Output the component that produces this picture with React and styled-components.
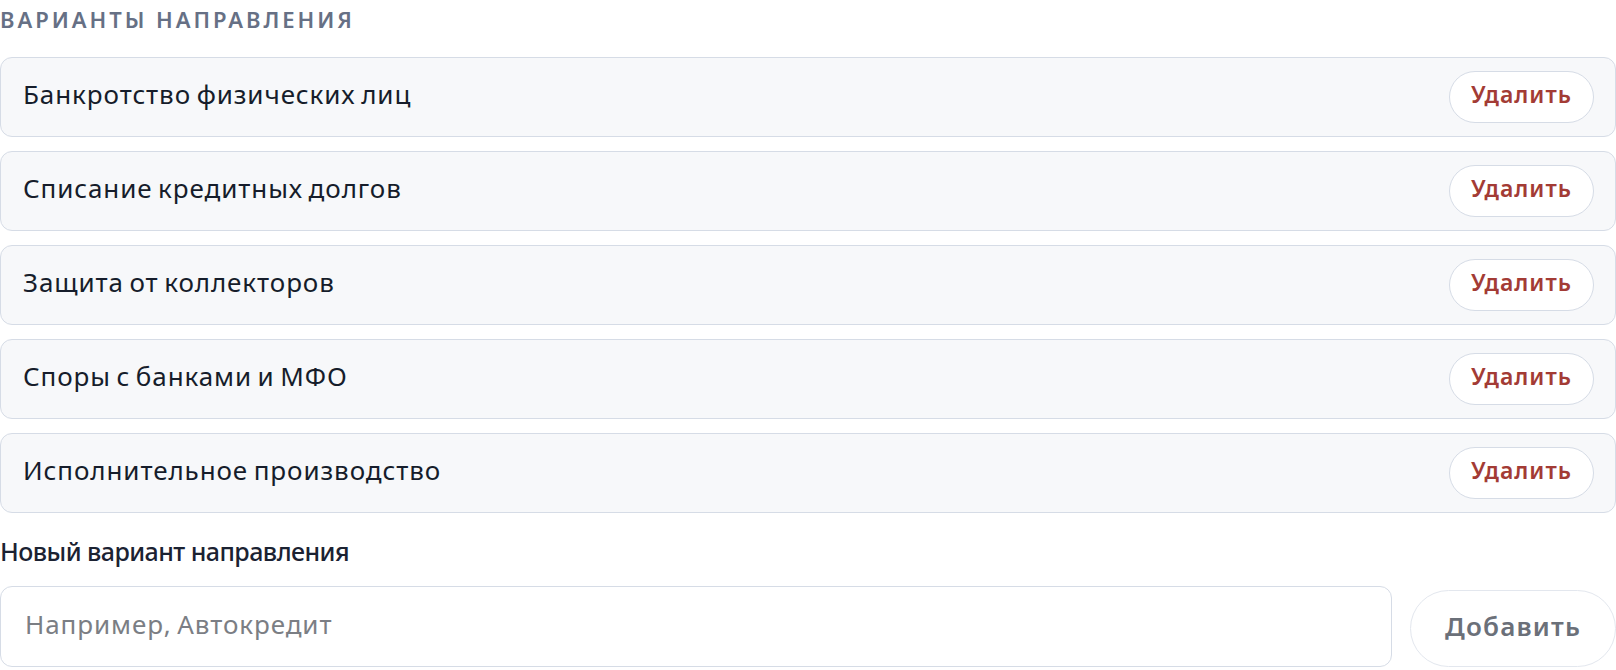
import React, { useState } from 'react'
import styled, { createGlobalStyle } from 'styled-components'

const GlobalStyle = createGlobalStyle`
  html, body {
    margin: 0;
    padding: 0;
    background: #ffffff;
  }
  body {
    font-family: 'Noto Sans', 'Open Sans', sans-serif;
    -webkit-font-smoothing: antialiased;
  }
  * {
    box-sizing: border-box;
  }
`

const Section = styled.section`
  display: flex;
  flex-direction: column;
  width: 100%;
`

const Heading = styled.h2`
  margin: 0 0 19px;
  font-size: 22px;
  line-height: 38px;
  font-weight: 600;
  letter-spacing: 0.135em;
  text-transform: uppercase;
  color: #667085;
`

const List = styled.div`
  display: flex;
  flex-direction: column;
  gap: 14px;
`

const Row = styled.div`
  display: flex;
  align-items: center;
  justify-content: space-between;
  height: 80px;
  padding: 0 21px 0 22px;
  background: #f7f8fa;
  border: 1px solid #d6dce6;
  border-radius: 12px;
`

const RowTitle = styled.span`
  margin-bottom: 7px;
  font-size: 26px;
  letter-spacing: 0.035em;
  word-spacing: -0.08em;
  color: #161d2b;
`

const PillButton = styled.button`
  display: inline-flex;
  align-items: center;
  justify-content: center;
  height: ${props => props.height}px;
  padding: 0 ${props => props.pad}px 6px;
  background: #ffffff;
  border: 1px solid ${props => props.border};
  border-radius: 999px;
  font-family: inherit;
  font-size: ${props => props.size}px;
  font-weight: 600;
  letter-spacing: 0.045em;
  color: ${props => props.color};
  cursor: pointer;
`

const Label = styled.label`
  display: block;
  margin: 20px 0 17px;
  font-size: 25px;
  line-height: 36px;
  font-weight: 500;
  letter-spacing: -0.022em;
  color: #1b2232;
`

const AddRow = styled.div`
  display: flex;
  align-items: flex-end;
  gap: 18px;
`

const Input = styled.input`
  flex: 1;
  height: 81px;
  padding: 0 24px 6px;
  background: #ffffff;
  border: 1px solid #d6dce6;
  border-radius: 12px;
  font-family: inherit;
  font-size: 26px;
  letter-spacing: 0.035em;
  word-spacing: -0.08em;
  color: #161d2b;
  outline: none;
  &::placeholder {
    color: #7b7e84;
  }
`

const initialItems = [
  'Банкротство физических лиц',
  'Списание кредитных долгов',
  'Защита от коллекторов',
  'Споры с банками и МФО',
  'Исполнительное производство',
]

const App = () => {
  const [items, setItems] = useState(initialItems)
  const [value, setValue] = useState('')

  const remove = i => setItems(items.filter((_, idx) => idx !== i))
  const add = () => {
    if (!value.trim()) return
    setItems([...items, value.trim()])
    setValue('')
  }

  return (
    <>
      <GlobalStyle />
      <Section>
        <Heading>Варианты направления</Heading>
        <List>
          {items.map((item, i) => (
            <Row key={i}>
              <RowTitle>{item}</RowTitle>
              <PillButton
                height={52}
                pad={21}
                size={23}
                color="#a33b35"
                border="#d6dce6"
                onClick={() => remove(i)}
              >
                Удалить
              </PillButton>
            </Row>
          ))}
        </List>
        <Label htmlFor="new-variant">Новый вариант направления</Label>
        <AddRow>
          <Input
            id="new-variant"
            placeholder="Например, Автокредит"
            value={value}
            onChange={e => setValue(e.target.value)}
          />
          <PillButton
            height={77}
            pad={34}
            size={26}
            color="#6b7079"
            border="#e3e7ee"
            onClick={add}
          >
            Добавить
          </PillButton>
        </AddRow>
      </Section>
    </>
  )
}

export default App
